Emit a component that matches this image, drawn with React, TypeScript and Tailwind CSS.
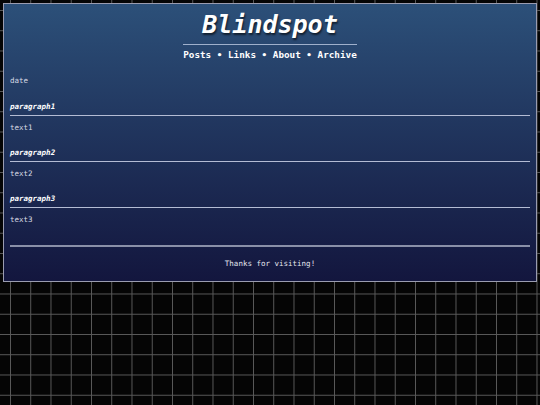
const sections = [
  { title: 'paragraph1', body: 'text1' },
  { title: 'paragraph2', body: 'text2' },
  { title: 'paragraph3', body: 'text3' },
]

export default function App() {
  return (
    <div
      className="h-[405px] w-[540px] overflow-hidden bg-[#050505] pt-[3px] pl-[3px] [font-family:'DejaVu_Sans_Mono',monospace]"
      style={{
        backgroundImage:
          'linear-gradient(to right, #5a5a5a 1px, transparent 1px), linear-gradient(to bottom, #5a5a5a 1px, transparent 1px)',
        backgroundSize: '20.25px 20.25px',
        backgroundPosition: '10px 10px',
      }}
    >
      <div className="flex h-[279px] w-[534px] flex-col border border-[#9a9cb0] bg-gradient-to-b from-[#2c5079] to-[#13163e] px-[6px]">
        <header className="flex flex-col items-center pt-[7px]">
          <h1 className="text-[25px] leading-[28px] font-bold italic text-white [text-shadow:1px_2px_2px_rgba(0,0,0,0.6)]">
            Blindspot
          </h1>
          <nav className="mt-[5px] border-t border-[#9fb0cc] pt-[4px] text-[9.3px] leading-[12px] font-bold text-white">
            Posts • Links • About • Archive
          </nav>
        </header>

        <p className="mt-[15px] text-[7.5px] leading-[10px] text-[#d8dae4]">date</p>

        <div className="mt-[16px] flex flex-col">
          {sections.map((s) => (
            <section key={s.title} className="mb-[15px]">
              <h2 className="border-b border-[#b4bcd4] pb-[3px] text-[7.5px] leading-[10px] font-bold italic text-white">
                {s.title}
              </h2>
              <p className="mt-[7px] text-[7.5px] leading-[10px] text-[#d8dae4]">{s.body}</p>
            </section>
          ))}
        </div>

        <footer className="mt-[5px] border-t-2 border-[#8a90a8] pt-[12px] text-center text-[7.5px] leading-[10px] text-[#e4e6ee]">
          Thanks for visiting!
        </footer>
      </div>
    </div>
  )
}
